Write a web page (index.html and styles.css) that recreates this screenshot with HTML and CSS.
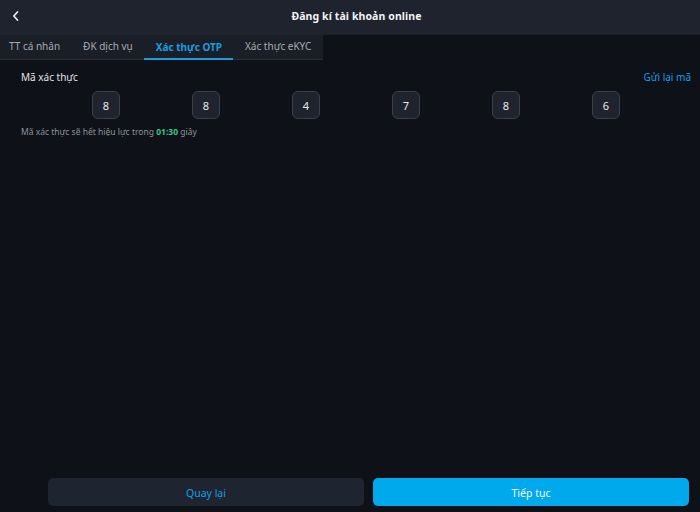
FILE: index.html
```html
<!DOCTYPE html>
<html lang="vi">
<head>
<meta charset="utf-8">
<link rel="stylesheet" href="styles.css">
</head>
<body>
<div class="app">
  <header class="topbar">
    <button class="back" aria-label="Quay lại">
      <svg width="10" height="12" viewBox="0 0 10 12"><path d="M6.5 2 L2.8 6 L6.5 10" fill="none" stroke="#e6e8ec" stroke-width="1.8" stroke-linecap="round" stroke-linejoin="round"/></svg>
    </button>
    <h1 class="title">Đăng kí tài khoản online</h1>
  </header>
  <nav class="tabs">
    <div class="tab">TT cá nhân</div>
    <div class="tab">ĐK dịch vụ</div>
    <div class="tab active">Xác thực OTP</div>
    <div class="tab">Xác thực eKYC</div>
  </nav>
  <main class="content">
    <div class="row-head">
      <span class="label">Mã xác thực</span>
      <a class="resend">Gửi lại mã</a>
    </div>
    <div class="otp">
      <div class="digit">8</div>
      <div class="digit">8</div>
      <div class="digit">4</div>
      <div class="digit">7</div>
      <div class="digit">8</div>
      <div class="digit">6</div>
    </div>
    <p class="note">Mã xác thực sẽ hết hiệu lực trong <b class="time">01:30</b> giây</p>
  </main>
  <footer class="actions">
    <button class="btn btn-back">Quay lại</button>
    <button class="btn btn-next">Tiếp tục</button>
  </footer>
</div>
</body>
</html>
```
FILE: styles.css
```css
* { box-sizing: border-box; }
html, body { margin: 0; padding: 0; }
body {
  background: #0e1117;
  font-family: "Noto Sans", "Liberation Sans", sans-serif;
  color: #e6e8ec;
}
.app {
  width: 700px;
  height: 512px;
  display: flex;
  flex-direction: column;
}
.topbar {
  height: 35px;
  background: #1e232e;
  display: flex;
  align-items: center;
  justify-content: center;
  position: relative;
}
.back {
  position: absolute;
  left: 10px;
  top: 9px;
  background: none;
  border: 0;
  padding: 0;
  width: 12px;
  height: 14px;
  display: flex;
  align-items: center;
  justify-content: center;
}
.title {
  margin: 0 0 3px 13px;
  font-size: 10.5px;
  font-weight: 700;
  color: #f2f3f5;
  letter-spacing: 0.1px;
}
.tabs {
  height: 25px;
  align-self: flex-start;
  background: #1a1e27;
  border-bottom: 1px solid #2a2f3a;
  display: flex;
}
.tab {
  padding: 0 11.5px;
  font-size: 10px;
  color: #a7abb3;
  display: flex;
  align-items: center;
  height: 24px;
  border-bottom: 2px solid transparent;
  white-space: nowrap;
}
.tab:first-child { padding-left: 9px; }
.tab.active {
  color: #1a9ce0;
  font-weight: 700;
  border-bottom: 2px solid #1a9ce0;
  height: 25px;
}
.content {
  flex: 1;
  padding: 9px 9px 0 21px;
}
.row-head {
  display: flex;
  justify-content: space-between;
  align-items: center;
  height: 16px;
}
.label {
  font-size: 10px;
  color: #e1e3e7;
}
.resend {
  font-size: 10px;
  color: #1a9ce0;
}
.otp {
  display: flex;
  gap: 72px;
  padding-left: 71px;
  margin-top: 6px;
}
.digit {
  width: 28px;
  height: 28px;
  border: 1px solid #3a3f4b;
  border-radius: 6px;
  background: #1e232d;
  display: flex;
  align-items: center;
  justify-content: center;
  font-size: 11px;
  color: #e8eaee;
}
.note {
  margin: 7px 0 0;
  font-size: 8.5px;
  color: #8d929b;
}
.time {
  color: #2ec98a;
  font-weight: 700;
}
.actions {
  display: flex;
  gap: 9px;
  padding: 0 11px 6px 48px;
}
.btn {
  flex: 1;
  height: 28px;
  border: 0;
  border-radius: 5px;
  padding-top: 2px;
  font-family: inherit;
  font-size: 10.5px;
}
.btn-back {
  background: #1e2430;
  color: #1a9ce0;
}
.btn-next {
  background: #00a8ec;
  color: #f4faff;
}
```
